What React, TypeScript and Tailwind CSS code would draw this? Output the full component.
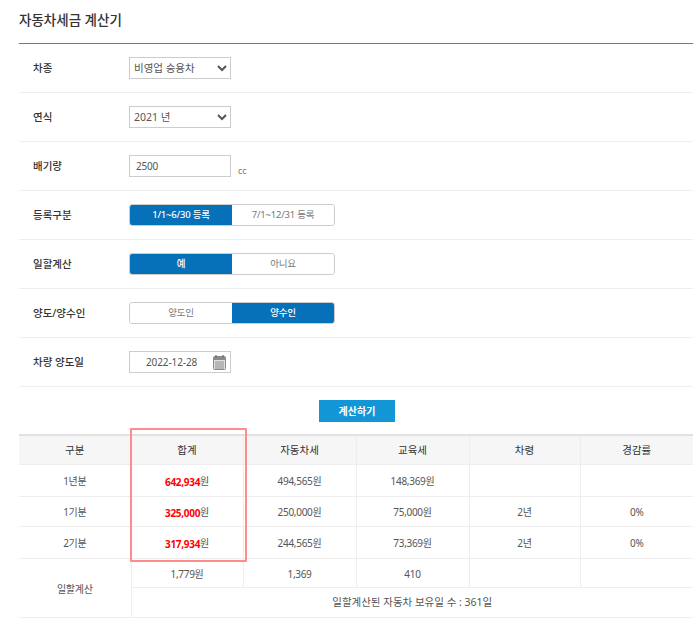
import React from "react";

function Row({ label, children }: { label: string; children: React.ReactNode }) {
  return (
    <div className="flex h-[49px] items-center border-b border-[#eeeeee]">
      <div className="w-[110px] pl-[14px] pt-[2px] text-[10.5px] font-medium text-[#333333]">{label}</div>
      {children}
    </div>
  );
}

function Toggle({ left, right, active }: { left: string; right: string; active: 0 | 1 }) {
  const on = "bg-[#0670b8] text-white font-medium";
  const off = "bg-white text-[#777777]";
  return (
    <div className="-mt-[1px] flex h-[22px] w-[206px] overflow-hidden rounded-[3px] border border-[#cccccc] text-[9.5px] tracking-[-0.2px]">
      <div className={`flex w-[102px] items-center justify-center pt-[1px] ${active === 0 ? on : off}`}>{left}</div>
      <div className={`flex flex-1 items-center justify-center pt-[1px] ${active === 1 ? on : off}`}>{right}</div>
    </div>
  );
}

function Select({ value, options }: { value: string; options: string[] }) {
  return (
    <select
      defaultValue={value}
      className="h-[22px] w-[102px] rounded-none border border-[#cccccc] bg-white text-[10.5px] text-[#555555] outline-none"
    >
      {options.map((o) => (
        <option key={o}>{o}</option>
      ))}
    </select>
  );
}

const cols = [112, 112, 113, 113, 111, 113];
const th = "border-r border-b border-[#eeeeee] bg-[#f6f6f6] pt-[2px] text-[10.5px] font-normal text-[#333333] last:border-r-0";
const td = "border-r border-b border-[#eeeeee] pt-[3px] text-center text-[10px] tracking-[-0.3px] text-[#555555] last:border-r-0";

function Won({ v }: { v: string }) {
  return (
    <span>
      <b className="relative top-[1px] font-bold text-[#ff0000]">{v}</b>원
    </span>
  );
}

export default function App() {
  return (
    <div
      className="relative h-[623px] w-[700px] overflow-hidden bg-white pl-[19px] pr-[7px]"
      style={{ fontFamily: '"Noto Sans", "Noto Sans CJK KR", sans-serif' }}
    >
      <h1 className="flex h-[43px] items-start pt-[10px] text-[13.5px] font-medium leading-5 text-[#333333]">
        자동차세금 계산기
      </h1>
      <div className="border-t border-[#777777]">
        <Row label="차종">
          <Select value="비영업 승용차" options={["비영업 승용차", "영업 승용차"]} />
        </Row>
        <Row label="연식">
          <Select value="2021 년" options={["2021 년", "2020 년"]} />
        </Row>
        <Row label="배기량">
          <input
            defaultValue="2500"
            className="h-[22px] w-[102px] border border-[#cccccc] pl-[6px] text-[10px] tracking-[-0.2px] text-[#555555] outline-none"
          />
          <span className="ml-[7px] mt-[10px] text-[9px] text-[#777777]">cc</span>
        </Row>
        <Row label="등록구분">
          <Toggle left="1/1~6/30 등록" right="7/1~12/31 등록" active={0} />
        </Row>
        <Row label="일할계산">
          <Toggle left="예" right="아니요" active={0} />
        </Row>
        <Row label="양도/양수인">
          <Toggle left="양도인" right="양수인" active={1} />
        </Row>
        <Row label="차량 양도일">
          <div className="flex h-[22px] w-[102px] items-center border border-[#cccccc] pl-[16px] text-[10px] tracking-[-0.1px] text-[#555555]">
            2022-12-28
            <svg className="ml-[16px]" width="13" height="15" viewBox="0 0 13 15">
              <rect x="0.5" y="1.5" width="12" height="13" rx="1" fill="#e2e2e2" stroke="#8a8a8a" />
              <rect x="1" y="2" width="11" height="3" fill="#8a8a8a" />
              <path d="M3 0v3M10 0v3" stroke="#777777" strokeWidth="1.4" />
              <path d="M2 7h9M2 9h9M2 11h9M2 13h9" stroke="#8a8a8a" strokeWidth="1" />
            </svg>
          </div>
        </Row>
      </div>

      <div className="flex h-[47px] items-center justify-center pl-[2px]">
        <button className="mt-[1px] h-[22px] w-[76px] bg-[#1296d6] text-[10px] font-bold text-white">계산하기</button>
      </div>

      <table className="w-[674px] table-fixed border-collapse border-t-2 border-[#e2e2e2]">
        <colgroup>
          {cols.map((c, i) => (
            <col key={i} style={{ width: c }} />
          ))}
        </colgroup>
        <thead>
          <tr className="h-[29px]">
            {["구분", "합계", "자동차세", "교육세", "차령", "경감률"].map((h) => (
              <th key={h} className={th}>
                {h}
              </th>
            ))}
          </tr>
        </thead>
        <tbody>
          <tr className="h-[32px]">
            <td className={td}>1년분</td>
            <td className={td}>
              <Won v="642,934" />
            </td>
            <td className={td}>494,565원</td>
            <td className={td}>148,369원</td>
            <td className={td}></td>
            <td className={td}></td>
          </tr>
          <tr className="h-[30px]">
            <td className={td}>1기분</td>
            <td className={td}>
              <Won v="325,000" />
            </td>
            <td className={td}>250,000원</td>
            <td className={td}>75,000원</td>
            <td className={td}>2년</td>
            <td className={td}>0%</td>
          </tr>
          <tr className="h-[32px]">
            <td className={td}>2기분</td>
            <td className={td}>
              <Won v="317,934" />
            </td>
            <td className={td}>244,565원</td>
            <td className={td}>73,369원</td>
            <td className={td}>2년</td>
            <td className={td}>0%</td>
          </tr>
          <tr className="h-[29px]">
            <td rowSpan={2} className={td}>
              일할계산
            </td>
            <td className={td}>1,779원</td>
            <td className={td}>1,369</td>
            <td className={td}>410</td>
            <td className={td}></td>
            <td className={td}></td>
          </tr>
          <tr className="h-[30px]">
            <td colSpan={5} className="border-b border-[#eeeeee] pt-[2px] text-center text-[10.5px] text-[#555555]">
              일할계산된 자동차 보유일 수 : 361일
            </td>
          </tr>
        </tbody>
      </table>

      <div className="pointer-events-none absolute left-[130px] top-[428px] h-[134px] w-[117px] rounded-[1px] border-2 border-[#ff8c8c]" />
    </div>
  );
}
